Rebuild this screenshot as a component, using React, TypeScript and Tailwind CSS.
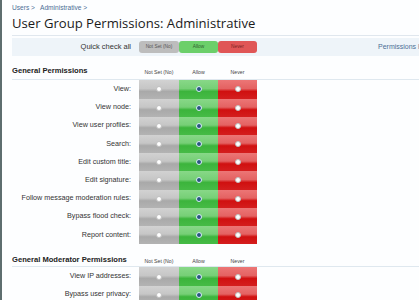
import React from "react";

const general = [
  "View:",
  "View node:",
  "View user profiles:",
  "Search:",
  "Edit custom title:",
  "Edit signature:",
  "Follow message moderation rules:",
  "Bypass flood check:",
  "Report content:",
];

const moderator = ["View IP addresses:", "Bypass user privacy:"];

function Radio({ checked }: { checked?: boolean }) {
  if (checked) {
    return (
      <span className="block h-[6px] w-[6px] rounded-full border border-[#d8eef8] bg-[#2a5680]" />
    );
  }
  return <span className="block h-[6px] w-[6px] rounded-full border border-[#c0c0c0] bg-white" />;
}

function Row({ label }: { label: string }) {
  return (
    <div className="flex h-[18.2px]">
      <div className="flex w-[127px] items-center justify-end pr-[8px] text-[7.2px] text-[#333]">
        {label}
      </div>
      <div className="flex w-[40px] items-center justify-center bg-[linear-gradient(#d2d2d2,#c6c6c6_45%,#a9a9a9_60%,#b3b3b3)]">
        <Radio />
      </div>
      <div className="flex w-[39px] items-center justify-center bg-[linear-gradient(#88d888,#76cf76_45%,#3cb43c_60%,#46bb46)]">
        <Radio checked />
      </div>
      <div className="flex w-[39px] items-center justify-center bg-[linear-gradient(#ec7676,#e46262_45%,#d01010_60%,#d41e1e)]">
        <Radio />
      </div>
    </div>
  );
}

function SectionHead({ title, pb }: { title: string; pb: string }) {
  return (
    <div className={`flex items-end border-b border-[#dfe8ef] ${pb}`}>
      <div className="w-[127px] text-[7.6px] font-bold text-[#222]">{title}</div>
      <div className="w-[40px] text-center text-[5.2px] text-[#444]">Not Set (No)</div>
      <div className="w-[39px] text-center text-[5.2px] text-[#444]">Allow</div>
      <div className="w-[39px] text-center text-[5.2px] text-[#444]">Never</div>
    </div>
  );
}

export default function App() {
  return (
    <div className="flex h-[300px] w-[419px] overflow-hidden bg-[#fdfeff] font-['Liberation_Sans',Arial,sans-serif]">
      <div className="w-[2px] shrink-0 bg-[#5e6e6f]" />
      <div className="flex-1 pl-[10px]">
        <div className="pt-[3px] text-[6.6px] leading-[10px] text-[#4b6e96]">
          Users &gt;&nbsp;&nbsp; Administrative &gt;
        </div>
        <h1 className="mt-[1px] border-b border-[#e0e7ee] pb-[3px] font-['Open_Sans',sans-serif] text-[13.1px] leading-[18px] text-[#1a1a1a]">
          User Group Permissions: Administrative
        </h1>
        <div className="mt-[2px] flex h-[18px] items-center bg-[#eef4f9]">
          <div className="w-[127px] pr-[8px] text-right text-[7.5px] text-[#333]">
            Quick check all
          </div>
          <div className="flex h-[12px] w-[118px] text-[4.8px]">
            <div className="flex w-[40px] items-center justify-center rounded-[3px] bg-[#bdbdbd] text-[#555]">
              Not Set (No)
            </div>
            <div className="flex w-[39px] items-center justify-center rounded-[3px] bg-[#6ccf6a] text-[#2f5f2f]">
              Allow
            </div>
            <div className="flex w-[39px] items-center justify-center rounded-[3px] bg-[#e05656] text-[#7a2323]">
              Never
            </div>
          </div>
          <div className="ml-auto pl-[121px] text-[7px] whitespace-nowrap text-[#4b6e96]">
            Permissions Help
          </div>
        </div>
        <div className="mt-[9px]">
          <SectionHead title="General Permissions" pb="pb-[3px]" />
          {general.map((l) => (
            <Row key={l} label={l} />
          ))}
        </div>
        <div className="mt-[10px]">
          <SectionHead title="General Moderator Permissions" pb="pb-[1px]" />
          {moderator.map((l) => (
            <Row key={l} label={l} />
          ))}
        </div>
      </div>
    </div>
  );
}
